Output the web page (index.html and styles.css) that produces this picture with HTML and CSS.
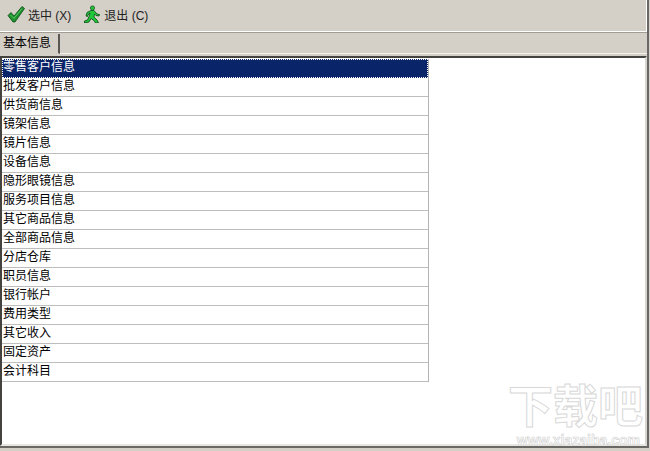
FILE: index.html
```html
<!DOCTYPE html>
<html lang="zh">
<head>
<meta charset="utf-8">
<title>基本信息</title>
<link rel="stylesheet" href="styles.css">
</head>
<body>
<div class="window">
  <div class="toolbar">
    <div class="tool">
      <svg class="icon" width="18" height="18" viewBox="0 0 18 18"><path d="M1 10.5 L4 7.5 L7 11 L15 1.5 L17.5 3.5 L8 17 L6 17 Z" fill="#1d8f2c" stroke="#0a4f14" stroke-width="0.8"/><path d="M3.5 10 L7 13.5 L15 3.5" fill="none" stroke="#5cc868" stroke-width="1"/></svg>
      <span>选中 (X)</span>
    </div>
    <div class="tool">
      <svg class="icon" width="18" height="18" viewBox="0 0 18 18"><circle cx="9.5" cy="3" r="2.1" fill="#22c83c" stroke="#05460f" stroke-width="0.7"/><path d="M8 5.5 L11 5.5 L14 9 L16.5 9.5 L16 11 L13 10.5 L11.5 9 L11 12 L14 15 L15.5 18 L12.5 18 L11 15.5 L8 13.5 L6 17 L1.5 18 L1.5 16 L4.5 15 L6.5 10.5 L7 8 L5.5 9 L4.5 11.5 L3 11 L4 7.5 Z" fill="#22c83c" stroke="#05460f" stroke-width="0.8"/></svg>
      <span>退出 (C)</span>
    </div>
  </div>
  <div class="tabstrip">
    <div class="tab">基本信息</div>
  </div>
  <div class="panel">
    <div class="list">
      <div class="row selected">零售客户信息</div>
      <div class="row">批发客户信息</div>
      <div class="row">供货商信息</div>
      <div class="row">镜架信息</div>
      <div class="row">镜片信息</div>
      <div class="row">设备信息</div>
      <div class="row">隐形眼镜信息</div>
      <div class="row">服务项目信息</div>
      <div class="row">其它商品信息</div>
      <div class="row">全部商品信息</div>
      <div class="row">分店仓库</div>
      <div class="row">职员信息</div>
      <div class="row">银行帐户</div>
      <div class="row">费用类型</div>
      <div class="row">其它收入</div>
      <div class="row">固定资产</div>
      <div class="row">会计科目</div>
    </div>
  </div>
  <div class="watermark">
    <div class="wm-big">下载吧</div>
    <div class="wm-small">www.xiazaiba.com</div>
  </div>
</div>
</body>
</html>
```

FILE: styles.css
```css
* { box-sizing: border-box; }
html, body { margin: 0; padding: 0; }
body {
  width: 650px;
  height: 451px;
  overflow: hidden;
  background: #d4d0c8;
  font-family: "Liberation Sans", "Noto Sans CJK SC", sans-serif;
  font-size: 12px;
  color: #000;
}
.window {
  position: relative;
  width: 649px;
  height: 448px;
  display: flex;
  flex-direction: column;
  border-right: 2px solid #6a6864;
  border-bottom: 2px solid #6a6864;
}
.toolbar {
  height: 32px;
  flex: none;
  display: flex;
  align-items: flex-start;
  gap: 12px;
  padding: 5px 0 0 7px;
  border-bottom: 1px solid #fff;
  border-right: 1px solid #fff;
  box-shadow: 0 1px 0 #a09c94;
}
.tool {
  display: flex;
  align-items: center;
  gap: 3px;
  height: 18px;
}
.icon { flex: none; display: block; }
.tool span { color: #222; }
.tabstrip {
  height: 22px;
  flex: none;
  padding: 2px 0 0 0;
  border-bottom: 1px solid #f4f2ec;
}
.tab {
  width: 60px;
  height: 20px;
  padding: 1px 0 0 3px;
  background: #d4d0c8;
  border-right: 2px solid #5a5852;
  border-bottom: 1px solid #d4d0c8;
  line-height: 16px;
}
.panel {
  flex: 1;
  margin-top: 2px;
  background: #fff;
  border-top: 2px solid #45433f;
  border-left: 2px solid #45433f;
  border-right: 2px solid #d8d5ce;
  border-bottom: 2px solid #e8e6e0;
  padding-top: 1px;
}
.list { width: 427px; border-right: 1px solid #b4b4b4; }
.row {
  height: 19px;
  line-height: 16px;
  padding-left: 1px;
  background: #fff;
  border-bottom: 1px solid #bdbdbd;
  white-space: nowrap;
}
.row.selected {
  background: #0a246a;
  color: #fff;
  outline: 1px dotted #fff;
  outline-offset: -1px;
  border-bottom-color: #0a246a;
}
.watermark {
  position: absolute;
  left: 508px;
  top: 387px;
  width: 135px;
  text-align: right;
  pointer-events: none;
}
.wm-big {
  font-size: 45px;
  line-height: 42px;
  font-weight: 700;
  color: #fff;
  -webkit-text-stroke: 1px #d8d8d8;
  white-space: nowrap;
  text-align: center;
}
.wm-small {
  margin-top: 5px;
  padding-right: 3px;
  font-size: 14px;
  line-height: 12px;
  font-weight: 700;
  color: #fff;
  -webkit-text-stroke: 0.6px #cfcfcf;
  white-space: nowrap;
}
```
